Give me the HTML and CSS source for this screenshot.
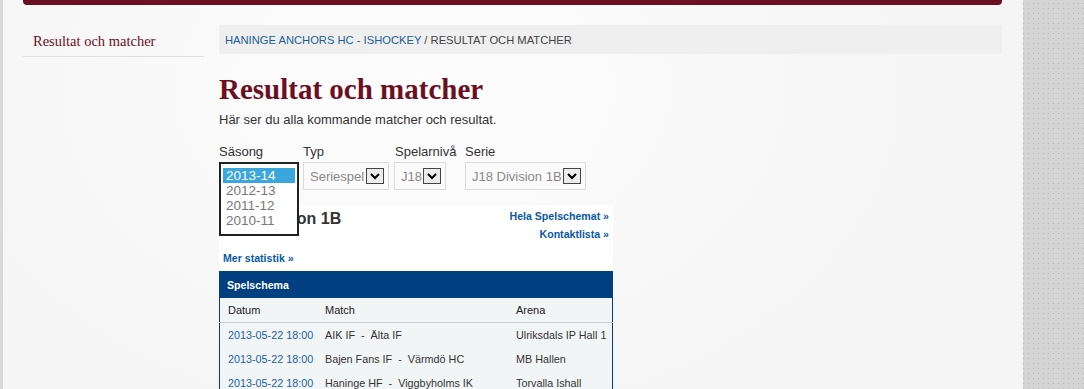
FILE: index.html
```html
<!DOCTYPE html>
<html lang="sv">
<head>
    <meta charset="UTF-8">
    <title>Resultat och matcher - Haninge Anchors HC</title>
    <link rel="stylesheet" href="styles.css">
</head>
<body>

    <div class="shell">
        <div class="topbar"></div>

        <div class="columns">
            <!-- Sidebar -->
            <aside class="sidebar">
                <a class="side-item" href="#">Resultat och matcher</a>
            </aside>

            <!-- Main -->
            <main class="main">
                <div class="breadcrumb">
                    <a href="#">HANINGE ANCHORS HC - ISHOCKEY</a> / RESULTAT OCH MATCHER
                </div>

                <h1>Resultat och matcher</h1>
                <p class="intro">Här ser du alla kommande matcher och resultat.</p>

                <div class="filters">
                    <div class="filter season">
                        <label>Säsong</label>
                        <div class="select w-season"><span>2013-14</span><i class="arrow"></i></div>
                        <!-- open dropdown list -->
                        <ul class="listbox">
                            <li class="selected">2013-14</li>
                            <li>2012-13</li>
                            <li>2011-12</li>
                            <li>2010-11</li>
                        </ul>
                    </div>
                    <div class="filter">
                        <label>Typ</label>
                        <div class="select w-type"><span>Seriespel</span><i class="arrow"><svg width="12" height="8" viewBox="0 0 12 8"><path d="M2 2 L6 6 L10 2" fill="none" stroke="#000" stroke-width="2"/></svg></i></div>
                    </div>
                    <div class="filter level">
                        <label>Spelarnivå</label>
                        <div class="select w-level"><span>J18</span><i class="arrow"><svg width="12" height="8" viewBox="0 0 12 8"><path d="M2 2 L6 6 L10 2" fill="none" stroke="#000" stroke-width="2"/></svg></i></div>
                    </div>
                    <div class="filter">
                        <label>Serie</label>
                        <div class="select w-serie"><span>J18 Division 1B</span><i class="arrow"><svg width="12" height="8" viewBox="0 0 12 8"><path d="M2 2 L6 6 L10 2" fill="none" stroke="#000" stroke-width="2"/></svg></i></div>
                    </div>
                </div>

                <!-- Serie widget -->
                <div class="widget">
                    <div class="widget-head">
                        <h2>J18 Division 1B</h2>
                        <div class="widget-links">
                            <a href="#">Hela Spelschemat »</a>
                            <a href="#">Kontaktlista »</a>
                        </div>
                    </div>
                    <a class="more" href="#">Mer statistik »</a>

                    <table class="schedule">
                        <thead>
                            <tr class="caption"><th colspan="3">Spelschema</th></tr>
                            <tr class="cols">
                                <th class="c-date">Datum</th>
                                <th class="c-match">Match</th>
                                <th class="c-arena">Arena</th>
                            </tr>
                        </thead>
                        <tbody>
                            <tr>
                                <td><a href="#">2013-05-22 18:00</a></td>
                                <td>AIK IF &nbsp;-&nbsp; Älta IF</td>
                                <td>Ulriksdals IP Hall 1</td>
                            </tr>
                            <tr>
                                <td><a href="#">2013-05-22 18:00</a></td>
                                <td>Bajen Fans IF &nbsp;-&nbsp; Värmdö HC</td>
                                <td>MB Hallen</td>
                            </tr>
                            <tr>
                                <td><a href="#">2013-05-22 18:00</a></td>
                                <td>Haninge HF &nbsp;-&nbsp; Viggbyholms IK</td>
                                <td>Torvalla Ishall</td>
                            </tr>
                        </tbody>
                    </table>
                </div>
            </main>
        </div>
    </div>

</body>
</html>
```

FILE: styles.css
```css
html, body {
    margin: 0;
    padding: 0;
}

body {
    font-family: "Liberation Sans", Arial, sans-serif;
    color: #333;
    background-color: #d4d4d4;
    background-image:
        linear-gradient(90deg, #d4d4d4 4px, transparent 4px),
        linear-gradient(#d4d4d4 4px, #b9b9b9 4px);
    background-size: 5px 5px;
    background-position: 4px 4px;
    overflow: hidden;
}

a {
    text-decoration: none;
}

.shell {
    width: 1020px;
    min-height: 100vh;
    border-left: 3px solid #d9d9d9;
    background: radial-gradient(ellipse 520px 360px at 420px 90px, #fdfdfd, #f5f5f5);
}

.topbar {
    height: 5px;
    margin: 0 21px 0 20px;
    background: #6d0f22;
    border-radius: 0 0 4px 4px;
}

.columns {
    display: flex;
    gap: 15px;
    margin: 0 21px 0 20px;
}

/* Sidebar */
.sidebar {
    width: 181px;
    padding-top: 25px;
}

.side-item {
    display: block;
    padding: 2px 10px 6px;
    font-family: Georgia, "Liberation Serif", serif;
    font-size: 14.5px;
    line-height: 18px;
    color: #6d0f22;
    border-bottom: 1px solid #e1e1e1;
}

/* Main */
.main {
    flex: 1;
    padding-top: 20px;
}

.breadcrumb {
    height: 29px;
    line-height: 30px;
    padding-left: 6px;
    background: #efefef;
    font-size: 11.2px;
    color: #444;
}

.breadcrumb a {
    color: #1d5f97;
}

h1 {
    margin: 20px 0 0;
    font-family: Georgia, "Liberation Serif", serif;
    font-size: 29px;
    line-height: 30px;
    font-weight: bold;
    color: #6d0f22;
}

.intro {
    margin: 7px 0 0;
    font-size: 13px;
    line-height: 18px;
    color: #333;
}

/* Filters */
.filters {
    display: flex;
    gap: 4px;
    margin-top: 15px;
}

.filter {
    display: flex;
    flex-direction: column;
    position: relative;
}

.filter label {
    font-size: 13px;
    line-height: 16px;
    color: #333;
    margin-bottom: 2px;
}

.filter.level {
    width: 65px;
    margin: 0 1px 0 2px;
}

.select {
    display: flex;
    align-items: center;
    height: 28px;
    box-sizing: border-box;
    border: 1px solid #dcdcdc;
    background: #fbfbfb;
    padding-left: 6px;
    font-size: 13px;
    color: #888;
}

.select span {
    flex: 1;
    white-space: nowrap;
}

.arrow {
    display: flex;
    align-items: center;
    justify-content: center;
    width: 16px;
    height: 14px;
    margin-right: 4px;
    border: 1px solid #444;
    background: #ececec;
}

.w-season { width: 80px; }
.w-type { width: 86px; }
.w-level { width: 52px; }
.w-serie { width: 121px; }

.filter.level .select {
    margin-left: -1px;
}

.listbox {
    position: absolute;
    top: 18px;
    left: 0;
    width: 80px;
    box-sizing: border-box;
    margin: 0;
    padding: 4px 2px 6px;
    list-style: none;
    border: 2px solid #222;
    background: #fff;
    font-size: 13.5px;
    line-height: 15px;
    color: #777;
    z-index: 2;
}

.listbox li {
    padding-left: 3px;
}

.listbox li.selected {
    background: #3aa6dc;
    color: #fff;
}

/* Widget */
.widget {
    width: 394px;
    margin-top: 15px;
    background: #fff;
}

.widget-head {
    display: flex;
    justify-content: space-between;
    padding: 2px 4px 0;
}

.widget-head h2 {
    margin: 3px 0 0;
    font-size: 16px;
    line-height: 18px;
    color: #333;
}

.widget-links {
    display: flex;
    flex-direction: column;
    align-items: flex-end;
}

.widget-links a,
.more {
    font-size: 10.6px;
    font-weight: bold;
    line-height: 18px;
    color: #0a59a8;
}

.more {
    display: block;
    padding: 6px 4px 4px;
}

.schedule {
    width: 100%;
    border-collapse: collapse;
    border-left: 1px solid #003f80;
    border-right: 1px solid #003f80;
    background: #f2f5f6;
    font-size: 10.8px;
}

.schedule .caption th {
    height: 27px;
    padding: 0 7px;
    background: #003f80;
    color: #fff;
    text-align: left;
    font-size: 10.6px;
    font-weight: bold;
}

.schedule .cols th {
    height: 24px;
    padding: 0 0 0 8px;
    text-align: left;
    font-size: 11px;
    font-weight: normal;
    color: #222;
    border-bottom: 1px solid #cacaca;
}

.schedule .c-date { width: 89px; }
.schedule .c-match { width: 183px; }

.schedule td {
    height: 24px;
    padding: 0 0 0 8px;
    color: #333;
    white-space: nowrap;
}

.schedule td a {
    color: #1a5fab;
}
```
